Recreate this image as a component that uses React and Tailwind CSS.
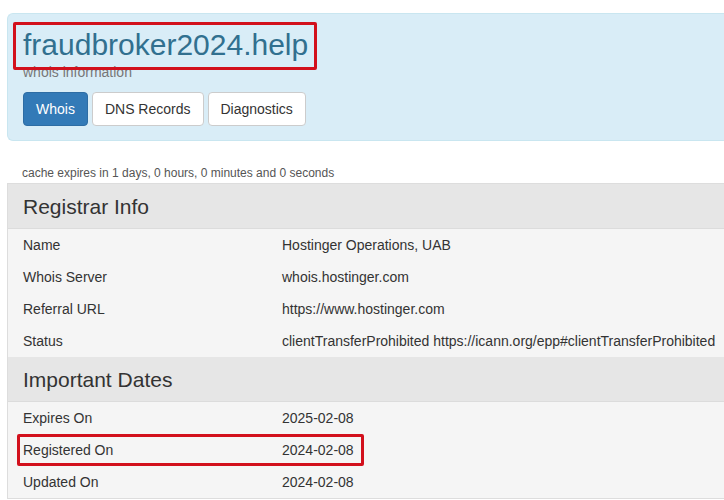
import React from 'react';

const registrar = [
  ['Name', 'Hostinger Operations, UAB'],
  ['Whois Server', 'whois.hostinger.com'],
  ['Referral URL', 'https://www.hostinger.com'],
  ['Status', 'clientTransferProhibited https://icann.org/epp#clientTransferProhibited'],
];

const dates = [
  ['Expires On', '2025-02-08'],
  ['Registered On', '2024-02-08'],
  ['Updated On', '2024-02-08'],
];

function Section({ title, rows }) {
  return (
    <>
      <div className="h-[45px] leading-[45px] bg-[#e6e6e6] border-b border-[#dcdcdc] pl-[15px] text-[21px] text-[#333]">
        {title}
      </div>
      {rows.map(([label, value]) => (
        <div key={label} className="flex h-[32px] leading-[32px] bg-[#f5f5f5] text-[14px] text-[#333]">
          <div className="w-[274px] shrink-0 pl-[15px]">{label}</div>
          <div className="whitespace-nowrap">{value}</div>
        </div>
      ))}
    </>
  );
}

export default function App() {
  return (
    <div
      className="relative w-[724px] h-[500px] overflow-hidden bg-white"
      style={{ fontFamily: '"Liberation Sans", Arial, sans-serif' }}
    >
      <div className="w-[760px]">
        {/* header panel */}
        <div className="ml-[7px] mt-[13px] rounded-l-[6px] border border-r-0 border-[#c9e6f0] bg-[#d9edf7] pl-[15px] pt-[14px] pb-[14px]">
          <h1 className="text-[30px] leading-[33px] text-[#31708f]">fraudbroker2024.help</h1>
          <div className="mt-[1px] text-[14px] leading-[20px] text-[#777]">whois information</div>
          <div className="mt-[10px] flex gap-[4px]">
            <button className="h-[34px] px-[12px] rounded-[4px] border border-[#2e6da4] bg-[#337ab7] text-[14px] text-white">
              Whois
            </button>
            <button className="h-[34px] px-[12px] rounded-[4px] border border-[#ccc] bg-white text-[14px] text-[#333]">
              DNS Records
            </button>
            <button className="h-[34px] px-[12px] rounded-[4px] border border-[#ccc] bg-white text-[14px] text-[#333]">
              Diagnostics
            </button>
          </div>
        </div>

        <div className="ml-[22px] mt-[24px] mb-[2px] text-[12px] leading-[16px] text-[#555]">
          cache expires in 1 days, 0 hours, 0 minutes and 0 seconds
        </div>

        <div className="ml-[7px] border-l border-t border-b border-[#ddd]">
          <Section title="Registrar Info" rows={registrar} />
          <Section title="Important Dates" rows={dates} />
        </div>
      </div>

      {/* highlight boxes */}
      <div className="absolute left-[13px] top-[22px] w-[304px] h-[48px] border-[3px] border-[#d2101c] rounded-[2px]" />
      <div className="absolute left-[17px] top-[434px] w-[347px] h-[32px] border-[3px] border-[#d2101c] rounded-[2px]" />
    </div>
  );
}
